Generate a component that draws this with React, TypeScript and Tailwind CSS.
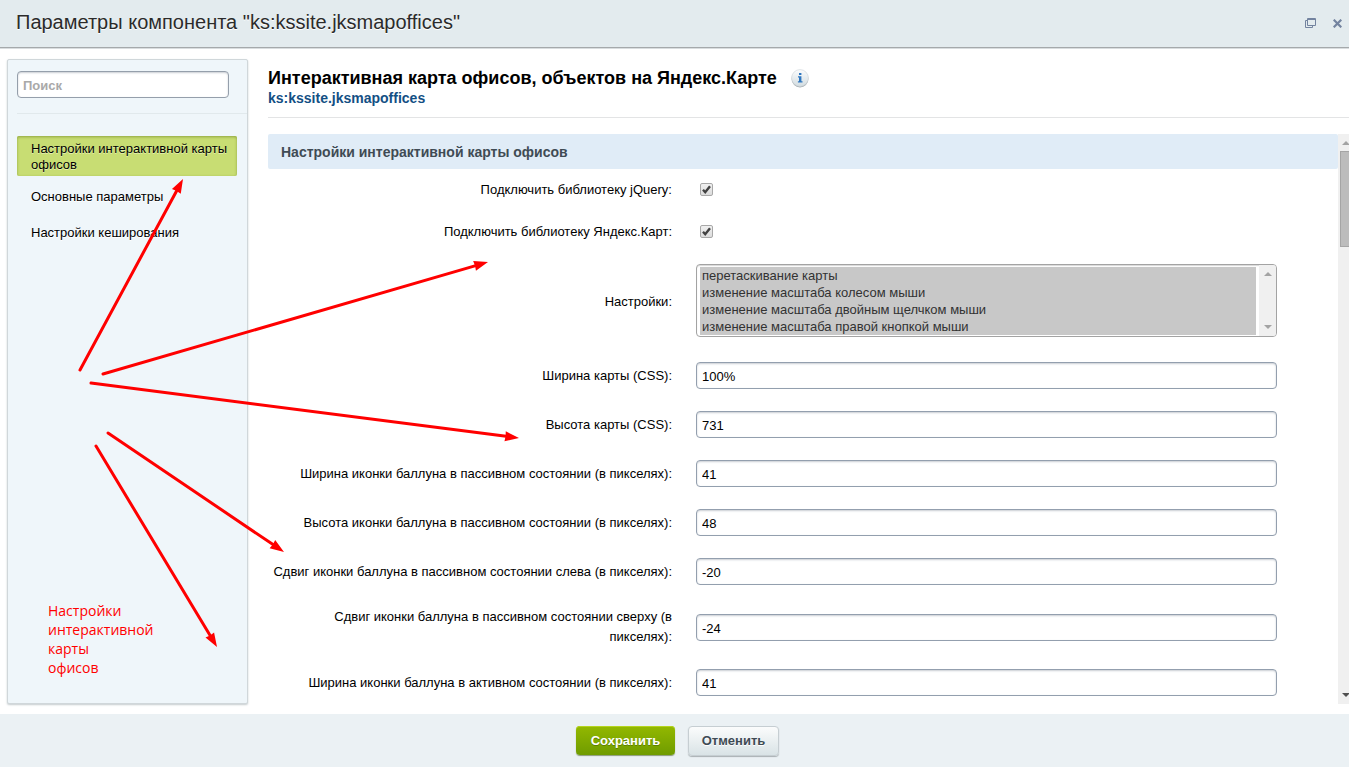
import { useState } from 'react';

const sections = ['Настройки интерактивной карты офисов', 'Основные параметры', 'Настройки кеширования'];

const mapOptions = [
  'перетаскивание карты',
  'изменение масштаба колесом мыши',
  'изменение масштаба двойным щелчком мыши',
  'изменение масштаба правой кнопкой мыши',
];

const textFields = [
  { id: 'map-width', label: 'Ширина карты (CSS):', value: '100%' },
  { id: 'map-height', label: 'Высота карты (CSS):', value: '731' },
  { id: 'icon-width', label: 'Ширина иконки баллуна в пассивном состоянии (в пикселях):', value: '41' },
  { id: 'icon-height', label: 'Высота иконки баллуна в пассивном состоянии (в пикселях):', value: '48' },
  { id: 'icon-left', label: 'Сдвиг иконки баллуна в пассивном состоянии слева (в пикселях):', value: '-20' },
  { id: 'icon-top', label: 'Сдвиг иконки баллуна в пассивном состоянии сверху (в пикселях):', value: '-24' },
  { id: 'active-width', label: 'Ширина иконки баллуна в активном состоянии (в пикселях):', value: '41' },
];

const arrows = [
  [80, 370, 183, 179],
  [103, 374, 488, 262],
  [91, 383, 519, 438],
  [108, 433, 284, 552],
  [96, 446, 217, 647],
];

interface FieldRowProps {
  id: string;
  label: string;
  children: React.ReactNode;
}

function FieldRow({ id, label, children }: FieldRowProps) {
  return (
    <div className="flex items-center py-[11px]">
      <label htmlFor={id} className="w-2/5 shrink-0 pl-1 pr-6 text-right leading-5">
        {label}
      </label>
      <div className="flex-1 pr-[61px]">{children}</div>
    </div>
  );
}

function Checkbox({ id }: { id: string }) {
  return (
    <span className="ml-1 mb-0.5 grid w-[13px] h-[13px]">
      <input
        id={id}
        type="checkbox"
        defaultChecked
        className="peer col-start-1 row-start-1 appearance-none w-[13px] h-[13px] rounded-xs border border-[#a8a8a8] bg-linear-to-b from-[#f0f0f0] to-[#dcdcdc]"
      />
      <svg viewBox="0 0 13 13" className="col-start-1 row-start-1 pointer-events-none opacity-0 peer-checked:opacity-100">
        <path d="M3 6.8 L5.2 9.2 L10 3.2" fill="none" stroke="#424242" strokeWidth="2.4" />
      </svg>
    </span>
  );
}

function ArrowUp({ color }: { color: string }) {
  return (
    <svg width="8" height="4" viewBox="0 0 8 4" fill={color}>
      <path d="M4 0 L8 4 H0 Z" />
    </svg>
  );
}

function ArrowDown({ color }: { color: string }) {
  return (
    <svg width="8" height="4" viewBox="0 0 8 4" fill={color}>
      <path d="M0 0 H8 L4 4 Z" />
    </svg>
  );
}

function Annotations() {
  return (
    <div className="absolute inset-0 pointer-events-none overflow-hidden">
      <svg className="absolute left-0 top-0 w-full h-full">
        {arrows.map(([x1, y1, x2, y2]) => {
          const length = Math.hypot(x2 - x1, y2 - y1);
          const angle = (Math.atan2(y2 - y1, x2 - x1) * 180) / Math.PI;
          return (
            <g key={`${x1}-${y1}`} transform={`translate(${x1} ${y1}) rotate(${angle})`} fill="#ff0000">
              <line x1="0" y1="0" x2={length - 11} y2="0" stroke="#ff0000" strokeWidth="3" strokeLinecap="round" />
              <path d="M0 0 L-14 -5 L-13.5 0 L-14 5 Z" transform={`translate(${length} 0)`} />
            </g>
          );
        })}
      </svg>
      <p className="absolute left-12 top-[601px] w-28 font-['Open_Sans','Noto_Sans',sans-serif] text-sm leading-[19px] text-[#ff0000]">
        Настройки интерактивной карты
        <br />
        офисов
      </p>
    </div>
  );
}

export default function App() {
  const [active, setActive] = useState(0);

  return (
    <div className="relative h-screen flex flex-col bg-white font-['Liberation_Sans',Arial,sans-serif] text-[13px] text-black">
      <header className="h-12 shrink-0 flex items-center justify-between pl-4 pr-[7px] pb-1 bg-[#e3ebee] border-b border-[#a5a9ab] shadow-[0_1px_0_#d9dddf]">
        <h1 className="text-xl text-[#2b2b2b] [text-shadow:0_1px_0_#fff]">Параметры компонента "ks:kssite.jksmapoffices"</h1>
        <div className="flex items-center gap-[17px] pt-1">
          <button type="button" aria-label="Развернуть">
            <svg width="11" height="11" viewBox="0 0 11 11" fill="none" stroke="#73839f" className="block">
              <path d="M2.5 0.5 H10.5 V7.5 H2.5 Z M2.5 1.5 H10.5 M2 2.5 H0.5 V9.5 H7.5 V8" />
            </svg>
          </button>
          <button type="button" aria-label="Закрыть">
            <svg width="9" height="9" viewBox="0 0 9 9" fill="none" stroke="#73839f" strokeWidth="2.2" className="block">
              <path d="M0.7 0.7 L8.3 8.3 M8.3 0.7 L0.7 8.3" />
            </svg>
          </button>
        </div>
      </header>

      <div className="flex-1 min-h-0 flex pt-[11px] pb-[10px] pl-[7px]">
        <aside className="w-[241px] shrink-0 bg-[#eff6fa] border border-[#d0d7da] rounded-xs shadow-[0_1px_2px_#c5cccf]">
          <div className="ml-[9px] pt-[11px] pb-[15px] border-b border-[#e1e9ec]">
            <input
              type="search"
              placeholder="Поиск"
              aria-label="Поиск"
              className="block w-[212px] h-[27px] px-[5px] pt-0.5 bg-white border border-[#959fab] rounded-sm shadow-[inset_0_1px_2px_#c9cdd3] font-bold placeholder:text-[#a9a9a9]"
            />
          </div>
          <nav className="mt-[22px] ml-[9px] mr-[10px]">
            {sections.map((name, i) => (
              <a
                key={name}
                href="#"
                onClick={() => setActive(i)}
                className={
                  i === active
                    ? 'block mb-0.5 pl-[14px] pr-1 pt-[5px] pb-[3px] leading-4 bg-[#c8dd73] rounded-xs shadow-[inset_0_1px_3px_#8fa53f] [text-shadow:0_1px_0_#e3efae]'
                    : 'block pl-[14px] pr-1 pt-[11px] pb-[9px] leading-4 [text-shadow:0_1px_0_#fff]'
                }
              >
                {name}
              </a>
            ))}
          </nav>
        </aside>

        <main className="flex-1 min-w-0 ml-5 flex flex-col">
          <div className="h-[59px] shrink-0 pt-[7px] border-b border-[#e3e4e5]">
            <div className="flex items-center gap-[14px]">
              <h2 className="text-lg leading-6 font-bold">Интерактивная карта офисов, объектов на Яндекс.Карте</h2>
              <button type="button" aria-label="Справка">
                <svg width="18" height="20" viewBox="0 0 18 20" className="block">
                  <defs>
                    <linearGradient id="info" x1="0" y1="0" x2="0" y2="1">
                      <stop offset="0" stopColor="#fbfcfd" />
                      <stop offset="1" stopColor="#d3dde1" />
                    </linearGradient>
                  </defs>
                  <circle cx="9" cy="11" r="8.4" fill="#a3abaf" />
                  <circle cx="9" cy="10" r="8.4" fill="url(#info)" stroke="#ccd4d8" strokeWidth="0.6" />
                  <path d="M8 5 h2.4 v2 h-2.4 Z M7 8.2 h3.4 v5 h1.1 v1.2 h-4.6 v-1.2 h1.1 v-3.8 h-1 Z" fill="#2f77c0" />
                </svg>
              </button>
            </div>
            <p className="text-sm leading-4 font-bold text-[#134f84]">ks:kssite.jksmapoffices</p>
          </div>

          <div className="flex-1 min-h-0 flex mt-4">
            <form className="flex-1 overflow-y-auto [scrollbar-width:none]">
              <h3 className="h-[35px] pl-[13px] flex items-center bg-[#e0ecf7] rounded-xs text-sm font-bold text-[#3f4b54]">
                Настройки интерактивной карты офисов
              </h3>
              <FieldRow id="jquery" label="Подключить библиотеку jQuery:">
                <Checkbox id="jquery" />
              </FieldRow>
              <FieldRow id="ymaps" label="Подключить библиотеку Яндекс.Карт:">
                <Checkbox id="ymaps" />
              </FieldRow>
              <FieldRow id="options" label="Настройки:">
                <div className="mb-[3px] flex h-[73px] bg-white border border-[#a3a3a3] rounded-sm overflow-hidden shadow-[inset_0_1px_1px_#d8d8d8]">
                  <select
                    id="options"
                    multiple
                    size={4}
                    defaultValue={mapOptions}
                    className="flex-1 px-[3px] pt-0.5 pb-px bg-transparent outline-none [scrollbar-width:none]"
                  >
                    {mapOptions.map((name) => (
                      <option key={name} className="h-[17px] min-h-0 px-0.5 pt-px pb-0 leading-4 text-[#323232] checked:bg-[linear-gradient(#c8c8c8,#c8c8c8)]">
                        {name}
                      </option>
                    ))}
                  </select>
                  <div className="w-[17px] py-[7px] flex flex-col items-center justify-between bg-[#f0f0f0]">
                    <ArrowUp color="#a3a3a3" />
                    <ArrowDown color="#a3a3a3" />
                  </div>
                </div>
              </FieldRow>
              {textFields.map((field) => (
                <FieldRow key={field.id} id={field.id} label={field.label}>
                  <input
                    id={field.id}
                    type="text"
                    defaultValue={field.value}
                    className="block w-full h-[27px] px-[5px] pt-0.5 bg-white border border-[#939fae] rounded-sm shadow-[inset_0_1px_2px_#c9cdd3]"
                  />
                </FieldRow>
              ))}
            </form>
            <div className="w-[11px] flex overflow-hidden bg-[#f0f0f0]">
              <div className="w-[17px] shrink-0 flex flex-col py-[7px] pl-0.5">
                <div className="pl-[2px]">
                  <ArrowUp color="#a3a3a3" />
                </div>
                <div className="mt-1.5 mb-auto w-[15px] h-24 bg-[#bcbcbc] border border-[#a5a5a5]" />
                <div className="pl-[2px]">
                  <ArrowDown color="#505050" />
                </div>
              </div>
            </div>
          </div>
        </main>
      </div>

      <footer className="h-[53px] shrink-0 flex items-center justify-center gap-[13px] pl-1.5 bg-[#ebf1f4] font-bold">
        <button
          type="button"
          className="h-[29px] min-w-[99px] px-3 rounded-sm text-white bg-linear-to-b from-[#93b800] to-[#6f9c00] shadow-[0_1px_1px_#8a9a78,inset_0_1px_0_#b5d51c] [text-shadow:0_1px_0_#5d7f00]"
        >
          Сохранить
        </button>
        <button
          type="button"
          className="h-[30px] min-w-[91px] px-3 rounded-sm text-[#3f4b54] bg-linear-to-b from-[#fbfcfc] to-[#d9e3e6] border border-[#c6ced2] shadow-[0_1px_1px_#a9b0b3] [text-shadow:0_1px_0_#fff]"
        >
          Отменить
        </button>
      </footer>

      <Annotations />
    </div>
  );
}
